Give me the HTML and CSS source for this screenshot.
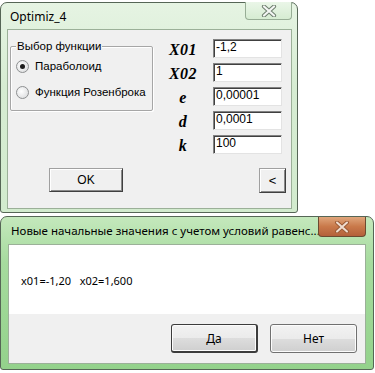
FILE: index.html
```html
<!DOCTYPE html>
<html lang="ru">
<head>
  <meta charset="UTF-8">
  <meta name="viewport" content="width=device-width, initial-scale=1.0">
  <title>Optimiz_4</title>
  <link rel="stylesheet" href="styles.css">
</head>
<body>
  <div class="win win1">
    <div class="titlebar">Optimiz_4</div>
    <div class="close close-idle">
      <svg width="16" height="12" viewBox="0 0 16 12">
        <path d="M3 1.5 L13 10.5 M13 1.5 L3 10.5" stroke="#6f7f6f" stroke-width="4.2" stroke-linecap="round"/>
        <path d="M3 1.5 L13 10.5 M13 1.5 L3 10.5" stroke="#f4f6f4" stroke-width="2.2" stroke-linecap="round"/>
      </svg>
    </div>

    <div class="client client1">
      <div class="top-row">
        <div class="group">
          <span class="legend">Выбор функции</span>
          <div class="radio"><span class="dot checked"></span>Параболоид</div>
          <div class="radio second"><span class="dot"></span>Функция Розенброка</div>
        </div>

        <div class="params">
          <span class="var">X01</span><div class="field">-1,2</div>
          <span class="var">X02</span><div class="field">1</div>
          <span class="var">e</span><div class="field">0,00001</div>
          <span class="var">d</span><div class="field">0,0001</div>
          <span class="var">k</span><div class="field">100</div>
        </div>
      </div>

      <div class="btn-row">
        <div class="btn3d ok">OK</div>
        <div class="btn3d back">&lt;</div>
      </div>
    </div>
  </div>

  <div class="win win2">
    <div class="titlebar">Новые начальные значения с учетом условий равенс...</div>
    <div class="close close-active">
      <svg width="16" height="12" viewBox="0 0 16 12">
        <path d="M3 1.5 L13 10.5 M13 1.5 L3 10.5" stroke="#9a5a36" stroke-width="4" stroke-linecap="round"/>
        <path d="M3 1.5 L13 10.5 M13 1.5 L3 10.5" stroke="#f0ddd0" stroke-width="2" stroke-linecap="round"/>
      </svg>
    </div>

    <div class="client client2">
      <div class="message">x01=-1,20&nbsp;&nbsp;&nbsp;x02=1,600</div>
      <div class="msg-buttons">
        <div class="btn7 default">Да</div>
        <div class="btn7">Нет</div>
      </div>
    </div>
  </div>
</body>
</html>
```

FILE: styles.css
```css
* {
  box-sizing: border-box;
}
body {
  margin: 0;
  padding-top: 2px;
  background: #fff;
  font-family: "Liberation Sans", Arial, sans-serif;
  font-size: 11px;
  color: #000;
}
.win {
  position: relative;
  border: 1px solid #566656;
  border-radius: 7px 7px 3px 3px;
}
.win1 {
  width: 298px;
  padding: 0 5px 3px 6px;
  background: linear-gradient(to bottom, #e6f4e3, #d6ecd2 40%, #d2ebce);
}
.win2 {
  width: 374px;
  margin-top: 3px;
  padding: 0 7px 5px 7px;
  background: linear-gradient(to bottom, #c4e8bc, #a6db9e 30%, #93d28b);
}
.titlebar {
  height: 26px;
  display: flex;
  align-items: center;
  padding-left: 3px;
  font-family: "Noto Sans", "Open Sans", sans-serif;
  font-size: 12px;
  white-space: nowrap;
}
.win2 .titlebar {
  height: 27px;
  font-size: 11.5px;
}
.close {
  position: absolute;
  display: flex;
  align-items: center;
  justify-content: center;
  border-radius: 0 0 4px 4px;
}
.close-idle {
  top: -1px;
  right: 5px;
  width: 47px;
  height: 18px;
  border: 1px solid #97ad95;
  border-top: none;
  background: linear-gradient(to bottom, #eaf6e8, #d6ecd2);
}
.close-active {
  top: 0;
  right: 7px;
  width: 48px;
  height: 20px;
  border: 1px solid #6b4a30;
  border-top: none;
  background: linear-gradient(to bottom, #e0a67c, #c9794a 50%, #b4603a);
}

.client {
  border: 1px solid #9bb098;
}
.client1 {
  height: 180px;
  padding-left: 2px;
  background: #f0f0f0;
}
.top-row {
  display: flex;
  align-items: flex-start;
}
.group {
  width: 143px;
  height: 65px;
  margin-top: 16px;
  padding-left: 5px;
  border: 1px solid #a6a6a6;
  border-radius: 2px;
  box-shadow: 1px 1px 0 #fff, inset 1px 1px 0 #fff;
}
.legend {
  display: block;
  width: fit-content;
  margin-top: -8px;
  padding: 0 1px;
  line-height: 14px;
  background: #f0f0f0;
  font-size: 11.5px;
}
.radio {
  display: flex;
  align-items: center;
  gap: 6px;
  height: 16px;
  margin-top: 5px;
  font-size: 11.5px;
}
.radio.second {
  margin-top: 10px;
}
.dot {
  width: 13px;
  height: 13px;
  border: 1px solid #8d8f90;
  border-radius: 50%;
  background: radial-gradient(circle at 40% 40%, #fff, #e2e3e4 70%, #d0d2d4);
  display: flex;
  align-items: center;
  justify-content: center;
}
.dot.checked::after {
  content: "";
  width: 5px;
  height: 5px;
  border-radius: 50%;
  background: #1c1c1c;
}
.params {
  display: grid;
  grid-template-columns: 50px 69px;
  grid-auto-rows: 19px;
  column-gap: 5px;
  row-gap: 5px;
  margin-top: 9px;
  margin-left: 5px;
}
.var {
  display: flex;
  align-items: center;
  justify-content: center;
  padding-top: 2px;
  font-family: "Liberation Serif", "Times New Roman", serif;
  font-style: italic;
  font-weight: bold;
  font-size: 16px;
  letter-spacing: 0.5px;
}
.field {
  height: 19px;
  padding-left: 2px;
  line-height: 15px;
  background: #fff;
  border: 1px solid;
  border-color: #828282 #e3e3e3 #e3e3e3 #828282;
  box-shadow: inset 1px 1px 0 #404040;
  font-size: 12px;
}
.btn-row {
  display: flex;
  align-items: flex-start;
  margin-top: 14px;
  padding-right: 5px;
}
.btn3d {
  display: flex;
  align-items: center;
  justify-content: center;
  background: #f0f0f0;
  border: 1px solid;
  border-color: #a0a0a0 #404040 #404040 #a0a0a0;
  box-shadow: inset 1px 1px 0 #fff, inset -1px -1px 0 #8a8a8a;
  font-size: 12px;
}
.ok {
  width: 74px;
  height: 24px;
  margin-left: 39px;
}
.back {
  width: 27px;
  height: 25px;
  margin-left: auto;
  font-size: 13px;
}

.client2 {
  height: 120px;
  display: flex;
  flex-direction: column;
}
.message {
  height: 69px;
  padding: 28px 0 0 12px;
  background: #fff;
  line-height: 16px;
  font-family: "Noto Sans", "Open Sans", sans-serif;
  font-size: 11px;
}
.msg-buttons {
  flex: 1;
  display: flex;
  justify-content: flex-end;
  align-items: flex-start;
  gap: 12px;
  padding: 10px 8px 0 0;
  background: #f0f0f0;
}
.btn7 {
  width: 87px;
  height: 29px;
  display: flex;
  align-items: center;
  justify-content: center;
  border: 1px solid #707070;
  border-radius: 3px;
  background: linear-gradient(to bottom, #f2f2f2, #ebebeb 50%, #dddddd 51%, #cfcfcf);
  box-shadow: inset 0 0 0 1px #fcfcfc;
  font-family: "Noto Sans", "Open Sans", sans-serif;
  font-size: 12px;
}
.btn7.default {
  border-color: #3c3c3c;
  border-width: 1px 2px 2px 1px;
}
```
